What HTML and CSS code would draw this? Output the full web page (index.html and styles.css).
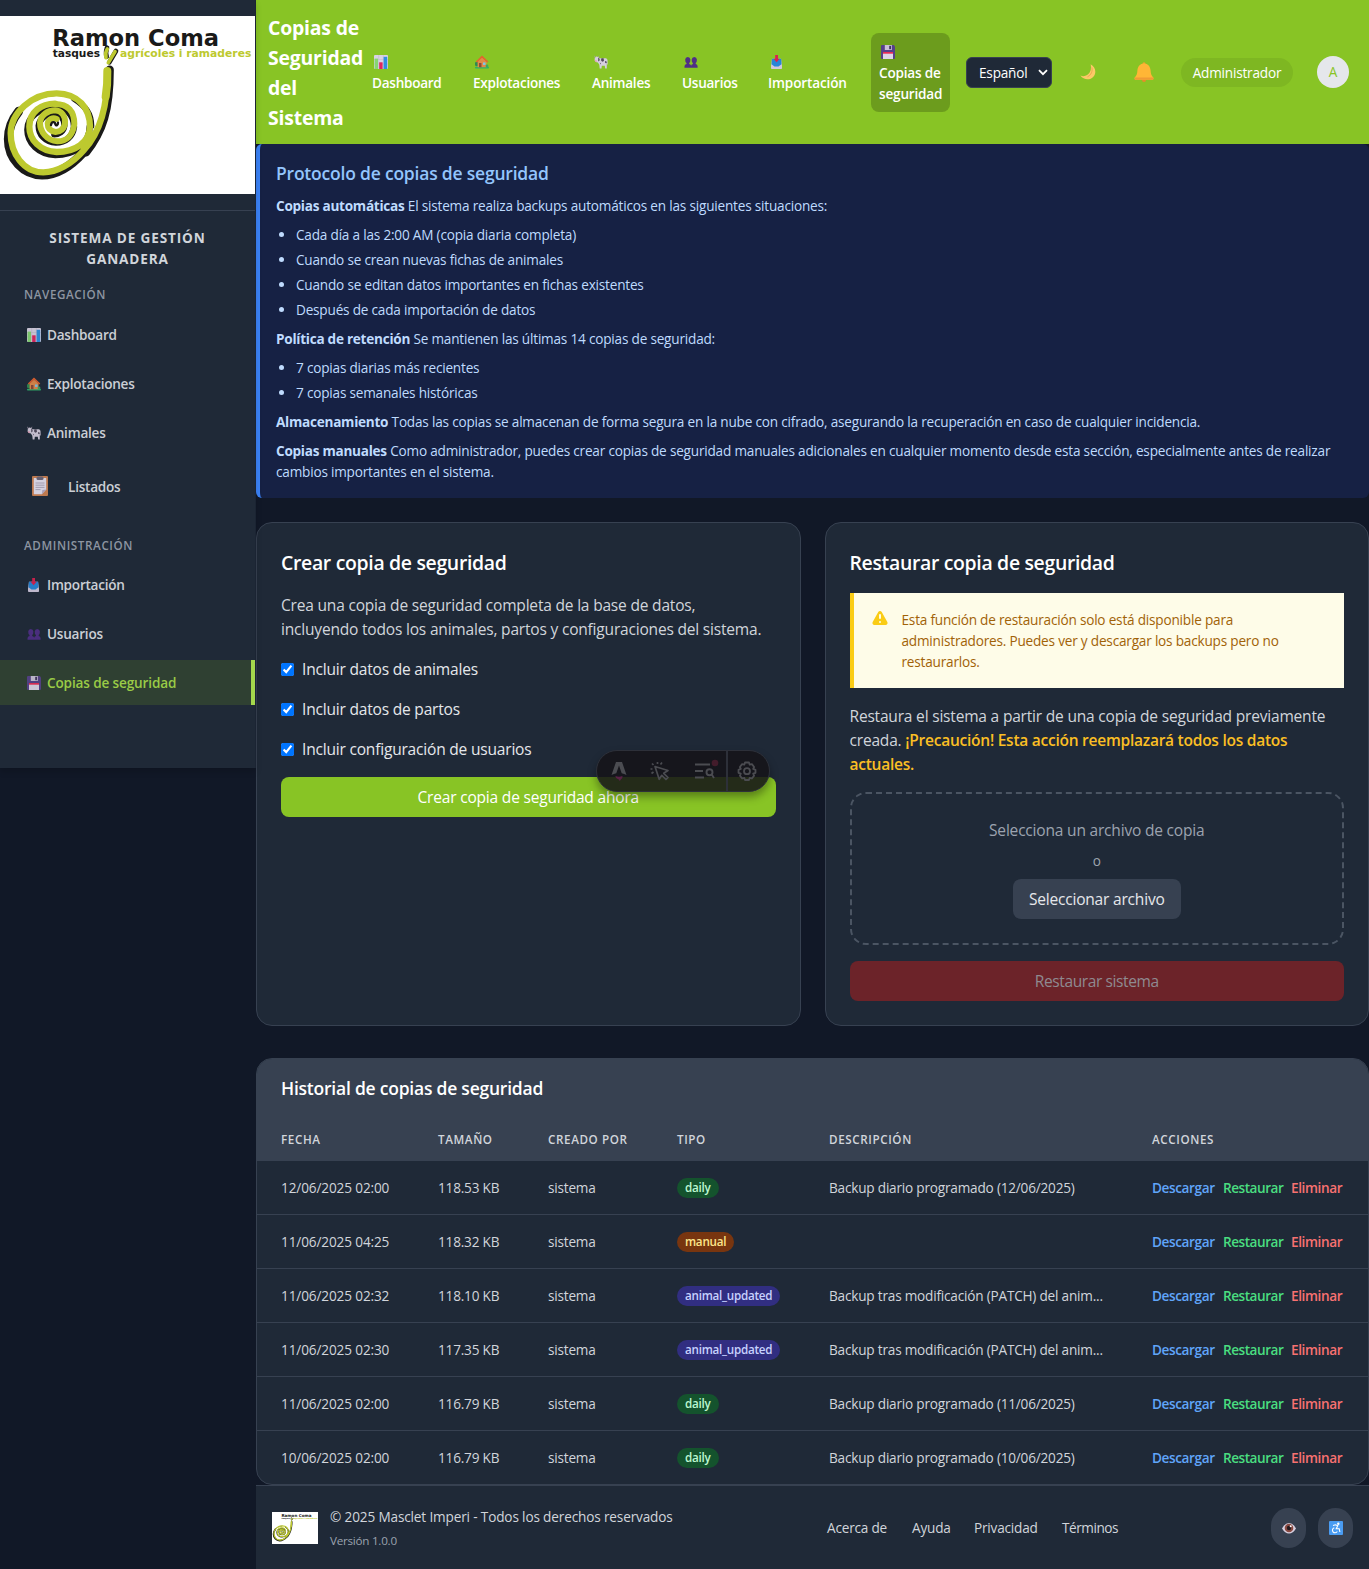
FILE: index.html
```html
<!DOCTYPE html>
<html lang="es">
<head>
<meta charset="utf-8">
<title>Copias de Seguridad del Sistema</title>
<link rel="stylesheet" href="styles.css">
</head>
<body>
<svg class="sprite" width="0" height="0" aria-hidden="true">
  <symbol id="chart" viewBox="0 0 14 14"><rect width="14" height="14" rx="1" fill="#d9d3e3"/><path d="M0 4.5h14M0 9h14M4.7 0v14M9.3 0v14" stroke="#bdb6c8" stroke-width=".5"/><rect x=".6" y="3.6" width="3.4" height="10.4" fill="#86d672"/><rect x="5.2" y="7.3" width="3.4" height="6.7" fill="#e0265e"/><rect x="9.6" y="1.8" width="3.6" height="12.2" fill="#2f8fe0"/></symbol>
  <symbol id="house" viewBox="0 0 14 14"><circle cx="2" cy="9" r="2.3" fill="#2e8b4f"/><rect y="11.8" width="14" height="1.6" rx=".7" fill="#2fae6a"/><path d="M2.6 6.5 7 2.4l4.6 4.1v5.7h-9z" fill="#e08a4a"/><path d="M1.4 7 7 1.6 12.8 7" fill="none" stroke="#e5622f" stroke-width="1.5"/><rect x="4" y="8" width="2.5" height="4.2" fill="#8c4b36"/><rect x="8" y="7.5" width="2.5" height="2.4" fill="#7cc8ee"/><circle cx="12" cy="11" r="1.4" fill="#38a562"/></symbol>
  <symbol id="cow" viewBox="0 0 14 14"><path d="M.8 2.600 2.400 1.600l1.900.500L5.600 3.200h6.600l1.300 1.600.2 5-.9-.8V13.400h-1.600l-.4-2.600H7.800L7.500 13.400H5.700L5.300 9.800 3.900 7.600 1.600 7 .6 5.600z" fill="#d5cede"/><path d="m4.200 2.600 1.400 1.200v1.800l-1.400.9zM7.400 3.300h2.200l.4 2.600-1.800.8-1.200-1.400zM11 6l1.600.4.2 1.800-1.600-.2zM5.800 7.400l1.200 1-.6 1.200z" fill="#514a5c"/><path d="M.7 5.400h2v1.400H1.500z" fill="#e58aa4"/><path d="m1.300 2.600-.8-1.800M4.400 2l.6-1.200" stroke="#a69aae" stroke-width=".8"/></symbol>
  <symbol id="users" viewBox="0 0 14 14"><path d="M.5 12.8v-1.5q0-2 2-2.2V8Q1 7 1.2 4.6 1.4 2 3.8 2t2.6 2.6Q6.500 7 5.200 8v1.100q2 .2 2 2.200v1.500zM7 12.8v-1.500q0-2 1.900-2.200V8Q7.500 7 7.700 4.600 8 2 10.300 2t2.600 2.600Q13 7 11.700 8v1.100q1.900.2 1.900 2.200v1.500z" fill="#4f2f86"/></symbol>
  <symbol id="inbox" viewBox="0 0 14 14"><path d="M2 3.800h9l1 6.700v2.700q0 .8-.8.8H2q-1 0-1-.8v-2.700z" fill="#cfc7dc"/><path d="M1.900 3.800h9.300l.3 5.500-1.700 1.200-1.300 1h-4l-1.300-1-1.700-1.200z" fill="#2785d8"/><path d="M5.200 0h2.800v3.800h1.700L6.600 7.200 3.500 3.800h1.700z" fill="#d9214e"/></symbol>
  <symbol id="floppy" viewBox="0 0 14 14"><path d="M1 0h11.800L14 1.400V13q0 1-1 1H1q-1 0-1-1V1q0-1 1-1z" fill="#55408a"/><rect x="3.800" width="7" height="5" fill="#c9c0d8"/><rect x="8.200" y=".8" width="1.800" height="3.400" fill="#40325f"/><rect x="2" y="7" width="10" height="7" fill="#ddd5e8"/><rect x="2" y="7" width="10" height="1.700" fill="#e92b56"/></symbol>
  <symbol id="clipboard" viewBox="0 0 16 20"><rect width="16" height="20" rx="1" fill="#cf8252"/><path d="M1.800 2h12.400v11.600L9.800 18.300h-8z" fill="#e9e4f2"/><path d="M14.200 13.600 9.800 18.300l.5-4.300z" fill="#b9aec9"/><rect x="4.500" y=".5" width="7" height="3.500" rx="1.500" fill="#6e6778"/><path d="M3.500 7h9M3.500 9.200h9M3.500 11.400h9M3.500 13.600h5" stroke="#a39bb0" stroke-width=".8"/></symbol>
  <symbol id="snail" viewBox="0 0 765 534">
    <g transform="translate(0 -48)" fill="none" stroke-linecap="round">
      <g stroke="#1a1a18" transform="translate(-4 9)"><path stroke-width="27" d="M60 325C40 350 29 380 29 408C29 468 75 516 130 516C175 516 215 492 255 447"/><path stroke-width="10" d="M60 325C90 290 125 276 170 274"/><path stroke-width="19" d="M273 372C273 425 225 456 170 456C120 454 86 420 86 380C86 338 125 316 165 314C205 312 226 338 226 372C222 402 200 419 172 419C140 418 120 395 120 368C122 346 145 331 165 329C185 331 198 347 197 368C195 386 180 394 167 394"/></g>
      <path stroke="#1a1a18" stroke-width="25" d="M329 209C329 330 308 395 258 457"/>
      <path stroke="#1a1a18" stroke-width="18" d="M222 296C256 318 274 340 274 378"/>
      <path stroke="#bdc92f" stroke-width="24" d="M322 213Q323 255 317 290"/>
      <path stroke="#bdc92f" stroke-width="19" d="M322 213C324 330 297 400 252 450C215 493 170 517 130 517C70 517 32 460 32 400C32 340 95 280 170 280C235 281 270 325 270 380C268 428 225 456 170 456C120 453 88 420 88 380C88 335 125 311 165 311"/>
      <path stroke="#bdc92f" stroke-width="18" d="M165 312C205 312 223 335 223 372C219 405 200 424 172 424C140 422 120 395 120 368C122 344 145 331 165 331C185 333 196 347 195 368C193 388 180 396 167 396C150 394 143 384 143 370C145 357 158 352 170 357"/>
      <path stroke="#1a1a18" stroke-width="7" d="M153 375C155 362 166 366 166 373C169 380 174 374 174 368"/>
      <path stroke="#1a1a18" stroke-width="14" d="M321 143q-5 15-1 27M348 153l-20 34"/>
      <path stroke="#bdc92f" stroke-width="11" d="M322 147q-8 12-4 26M345 155l-20 33"/>
    </g>
  </symbol>
</svg>

<div class="layout">
  <aside class="sidebar">
    <div class="brand">
      <svg class="brand-logo" viewBox="0 0 765 534" preserveAspectRatio="none">
        <rect width="765" height="534" fill="#fff"/>
        <text x="157" y="91" textLength="500" lengthAdjust="spacingAndGlyphs" class="logo-name">Ramon Coma</text>
        <text x="158" y="124" textLength="142" lengthAdjust="spacingAndGlyphs" class="logo-sub">tasques</text>
        <text x="360" y="124" textLength="394" lengthAdjust="spacingAndGlyphs" class="logo-sub logo-green">agrícoles i ramaderes</text>
        <use href="#snail" width="765" height="534"/>
      </svg>
    </div>
    <div class="system-name">SISTEMA DE GESTIÓN<br>GANADERA</div>
    <nav>
      <h3 class="side-heading">NAVEGACIÓN</h3>
      <a class="side-link"><svg class="emoji"><use href="#chart"/></svg><span>Dashboard</span></a>
      <a class="side-link"><svg class="emoji"><use href="#house"/></svg><span>Explotaciones</span></a>
      <a class="side-link"><svg class="emoji"><use href="#cow"/></svg><span>Animales</span></a>
      <a class="side-link side-link-large"><svg class="emoji-large"><use href="#clipboard"/></svg><span>Listados</span></a>
      <h3 class="side-heading side-heading-admin">ADMINISTRACIÓN</h3>
      <a class="side-link"><svg class="emoji"><use href="#inbox"/></svg><span>Importación</span></a>
      <a class="side-link"><svg class="emoji"><use href="#users"/></svg><span>Usuarios</span></a>
      <a class="side-link active"><svg class="emoji"><use href="#floppy"/></svg><span>Copias de seguridad</span></a>
    </nav>
  </aside>

  <div class="main">
    <header class="topbar">
      <h1 class="page-title">Copias de Seguridad del Sistema</h1>
      <nav class="topnav">
        <a class="top-link w-dash"><svg class="emoji"><use href="#chart"/></svg><span>Dashboard</span></a>
        <a class="top-link w-expl"><svg class="emoji"><use href="#house"/></svg><span>Explotaciones</span></a>
        <a class="top-link w-anim"><svg class="emoji"><use href="#cow"/></svg><span>Animales</span></a>
        <a class="top-link w-user"><svg class="emoji"><use href="#users"/></svg><span>Usuarios</span></a>
        <a class="top-link w-impo"><svg class="emoji"><use href="#inbox"/></svg><span>Importación</span></a>
        <a class="top-link w-copy current"><svg class="emoji"><use href="#floppy"/></svg><span>Copias de seguridad</span></a>
      </nav>
      <div class="language"><span>Español</span><svg width="10" height="7" viewBox="0 0 10 7"><path d="M1 1.200l4 4 4-4" fill="none" stroke="#fff" stroke-width="1.800"/></svg></div>
      <div class="moon"><svg width="16" height="16" viewBox="0 0 16 16"><path d="M10.600.300C15.500 3 16.700 8.500 13.600 12.500 10.200 16.500 3.800 16.400.400 11.600 4.500 13 8 11.500 9.800 8.300 11.200 5.600 11.200 2.800 10.600.300Z" fill="#fbc968"/><path d="M11.800 3.500c1 3.500-.5 7.500-4.300 9.300" fill="none" stroke="#eda951" stroke-width="1"/></svg></div>
      <div class="bell"><svg width="20" height="20" viewBox="0 0 20 20"><circle cx="10" cy="18" r="2" fill="#e88b2a"/><circle cx="10" cy="1.700" r="1.500" fill="#f5a42d"/><path d="M10 1.500c4 0 6.300 3 6.600 7 .2 3.500.7 5 2.700 6.900.5 1.700 0 2.400-1.300 2.400H2C.700 17.800.200 17 .700 15.400c2-1.900 2.500-3.400 2.700-6.900.3-4 2.600-7 6.600-7z" fill="#ffb636"/><path d="M.700 15.400h18.600c.5 1.700 0 2.400-1.300 2.400H2C.700 17.800.200 17 .700 15.400z" fill="#f09a35"/></svg></div>
      <div class="role">Administrador</div>
      <div class="avatar">A</div>
    </header>

    <section class="protocol">
      <h2>Protocolo de copias de seguridad</h2>
      <p><strong>Copias automáticas</strong> El sistema realiza backups automáticos en las siguientes situaciones:</p>
      <ul>
        <li>Cada día a las 2:00 AM (copia diaria completa)</li>
        <li>Cuando se crean nuevas fichas de animales</li>
        <li>Cuando se editan datos importantes en fichas existentes</li>
        <li>Después de cada importación de datos</li>
      </ul>
      <p><strong>Política de retención</strong> Se mantienen las últimas 14 copias de seguridad:</p>
      <ul>
        <li>7 copias diarias más recientes</li>
        <li>7 copias semanales históricas</li>
      </ul>
      <p><strong>Almacenamiento</strong> Todas las copias se almacenan de forma segura en la nube con cifrado, asegurando la recuperación en caso de cualquier incidencia.</p>
      <p><strong>Copias manuales</strong> Como administrador, puedes crear copias de seguridad manuales adicionales en cualquier momento desde esta sección, especialmente antes de realizar<br>cambios importantes en el sistema.</p>
    </section>

    <div class="cards">
      <section class="card">
        <h2>Crear copia de seguridad</h2>
        <p class="lead">Crea una copia de seguridad completa de la base de datos,<br>incluyendo todos los animales, partos y configuraciones del sistema.</p>
        <label class="check"><input type="checkbox" checked><span>Incluir datos de animales</span></label>
        <label class="check"><input type="checkbox" checked><span>Incluir datos de partos</span></label>
        <label class="check"><input type="checkbox" checked><span>Incluir configuración de usuarios</span></label>
        <div class="btn btn-create">Crear copia de seguridad ahora</div>
      </section>
      <section class="card">
        <h2>Restaurar copia de seguridad</h2>
        <div class="warning">
          <svg width="20" height="20" viewBox="0 0 20 20"><path fill="#facc15" fill-rule="evenodd" d="M8.257 3.099c.765-1.360 2.722-1.360 3.486 0l5.580 9.920c.750 1.334-.213 2.980-1.742 2.980H4.420c-1.530 0-2.493-1.646-1.743-2.980l5.580-9.920zM11 13a1 1 0 11-2 0 1 1 0 012 0zm-1-8a1 1 0 00-1 1v3a1 1 0 002 0V6a1 1 0 00-1-1z"/></svg>
          <p>Esta función de restauración solo está disponible para<br>administradores. Puedes ver y descargar los backups pero no<br>restaurarlos.</p>
        </div>
        <p class="lead">Restaura el sistema a partir de una copia de seguridad previamente<br>creada. <strong>¡Precaución! Esta acción reemplazará todos los datos<br>actuales.</strong></p>
        <div class="dropzone">
          <p>Selecciona un archivo de copia</p>
          <small>o</small>
          <div class="btn btn-file">Seleccionar archivo</div>
        </div>
        <div class="btn btn-restore">Restaurar sistema</div>
      </section>
    </div>

    <section class="history">
      <h2>Historial de copias de seguridad</h2>
      <table>
        <colgroup><col class="c1"><col class="c2"><col class="c3"><col class="c4"><col class="c5"><col></colgroup>
        <thead><tr><th>FECHA</th><th>TAMAÑO</th><th>CREADO POR</th><th>TIPO</th><th>DESCRIPCIÓN</th><th>ACCIONES</th></tr></thead>
        <tbody>
          <tr><td>12/06/2025 02:00</td><td>118.53 KB</td><td>sistema</td><td><span class="badge daily">daily</span></td><td>Backup diario programado (12/06/2025)</td><td><div class="actions"><a class="dl">Descargar</a><a class="rs">Restaurar</a><a class="rm">Eliminar</a></div></td></tr>
          <tr><td>11/06/2025 04:25</td><td>118.32 KB</td><td>sistema</td><td><span class="badge manual">manual</span></td><td></td><td><div class="actions"><a class="dl">Descargar</a><a class="rs">Restaurar</a><a class="rm">Eliminar</a></div></td></tr>
          <tr><td>11/06/2025 02:32</td><td>118.10 KB</td><td>sistema</td><td><span class="badge updated">animal_updated</span></td><td>Backup tras modificación (PATCH) del anim...</td><td><div class="actions"><a class="dl">Descargar</a><a class="rs">Restaurar</a><a class="rm">Eliminar</a></div></td></tr>
          <tr><td>11/06/2025 02:30</td><td>117.35 KB</td><td>sistema</td><td><span class="badge updated">animal_updated</span></td><td>Backup tras modificación (PATCH) del anim...</td><td><div class="actions"><a class="dl">Descargar</a><a class="rs">Restaurar</a><a class="rm">Eliminar</a></div></td></tr>
          <tr><td>11/06/2025 02:00</td><td>116.79 KB</td><td>sistema</td><td><span class="badge daily">daily</span></td><td>Backup diario programado (11/06/2025)</td><td><div class="actions"><a class="dl">Descargar</a><a class="rs">Restaurar</a><a class="rm">Eliminar</a></div></td></tr>
          <tr><td>10/06/2025 02:00</td><td>116.79 KB</td><td>sistema</td><td><span class="badge daily">daily</span></td><td>Backup diario programado (10/06/2025)</td><td><div class="actions"><a class="dl">Descargar</a><a class="rs">Restaurar</a><a class="rm">Eliminar</a></div></td></tr>
        </tbody>
      </table>
    </section>

    <footer class="footer">
      <svg class="footer-logo" viewBox="0 0 765 534" preserveAspectRatio="none">
        <rect width="765" height="534" fill="#fff"/>
        <text x="157" y="91" textLength="500" lengthAdjust="spacingAndGlyphs" class="logo-name">Ramon Coma</text>
        <text x="158" y="124" textLength="142" lengthAdjust="spacingAndGlyphs" class="logo-sub">tasques</text>
        <text x="360" y="124" textLength="394" lengthAdjust="spacingAndGlyphs" class="logo-sub logo-green">agrícoles i ramaderes</text>
        <use href="#snail" width="765" height="534"/>
      </svg>
      <div class="copyright"><p>© 2025 Masclet Imperi - Todos los derechos reservados</p><small>Versión 1.0.0</small></div>
      <nav class="footer-links"><a class="f1">Acerca de</a><a class="f2">Ayuda</a><a class="f3">Privacidad</a><a class="f4">Términos</a></nav>
      <div class="round"><svg width="14" height="12" viewBox="0 0 14 12"><path d="M0 6.500Q3 1 7 1t7 5.500Q11 11.500 7 11.500T0 6.500z" fill="#d8d0e0"/><circle cx="7" cy="6" r="4.300" fill="#8a4a42"/><circle cx="7" cy="6" r="2.200" fill="#24191d"/><circle cx="8.700" cy="4.200" r="1" fill="#fff"/></svg></div>
      <div class="round"><svg width="14" height="14" viewBox="0 0 14 14"><rect width="14" height="14" rx="1" fill="#4a9cf2"/><circle cx="9.300" cy="2.700" r="1.200" fill="#fff"/><path d="M4 4.500l2.500-.7 2.300.9-1.600 3h3l.7 3.300M5.300 6.700a2.600 2.600 0 1 0 3 3.800" fill="none" stroke="#fff" stroke-width="1.100"/></svg></div>
    </footer>
  </div>
</div>

<div class="devbar">
  <span class="tool tool-astro"><svg width="18" height="20" viewBox="0 0 18 20"><path d="M6 1h6l4.500 13q-2.200-1.300-4.800-1.700L9 4.500 6.300 12.300Q3.700 12.700 1.500 14z" fill="#4b4c51"/><path d="M5.500 15q3.500 1.500 7 0 .4 2.200-1.500 3.300L9.800 20l-1.300-1.800Q5.500 17.500 5.500 15z" fill="#5a2147"/></svg></span>
  <span class="tool tool-cursor"><svg width="20" height="20" viewBox="0 0 20 20" fill="none" stroke="#4b4c51" stroke-width="1.700" stroke-linejoin="round"><path d="M5 5.500 18 9.500l-4.300 2.800 4.300 4.200-2 2-4.200-4.200-2.600 4z"/><path d="M7.500 3V1M10.500 3.500 12 1.500M2.500 8h-2M3.500 11 1.500 12.500M3.500 4 2 2.500"/></svg></span>
  <span class="tool tool-audit"><svg width="24" height="20" viewBox="0 0 24 20" overflow="visible" fill="none" stroke="#4b4c51" stroke-width="1.900"><path d="M1 3.500h15M1 10h8M1 16.500h9"/><circle cx="15.500" cy="11.300" r="3"/><path d="m17.700 13.500 2.300 3.500"/><circle cx="21" cy="2" r="3.300" fill="#431c2b" stroke="none"/></svg></span>
  <span class="tool tool-settings"><svg width="20" height="20" viewBox="0 0 20 20" fill="none" stroke="#4b4c51" stroke-width="1.800" stroke-linejoin="round"><path d="M8 1.500h4l.7 2.200 2.200-.6 2.200 2.900-.9 1.900 2.300.9v3l-2.300.9.900 1.900-2.200 2.900-2.200-.7-.7 2.200H8l-.7-2.200-2.200.7-2.200-2.900.9-1.900-2.300-.9v-3l2.300-.9L2.900 6l2.200-2.900 2.200.6z"/><circle cx="10" cy="10.200" r="3"/></svg></span>
</div>
</body>
</html>
```
FILE: styles.css
```css
* { box-sizing: border-box; }
body {
  margin: 0;
  background: #111827;
  color: #d1d5db;
  font-family: "Open Sans", "Noto Sans", sans-serif;
  font-size: 14px;
  font-size-adjust: 0.52;
  letter-spacing: -.2px;
  line-height: 21px;
  position: relative;
}
h1, h2, h3, p, ul { margin: 0; padding: 0; }
.sprite { position: absolute; }
.logo-name, .logo-sub { font-family: "DejaVu Sans", sans-serif; font-weight: 700; font-size-adjust: none; letter-spacing: 0; fill: #1a1a18; }
.logo-name { font-size: 68px; }
.logo-sub { font-size: 31px; }
.logo-green { fill: #bdc92f; }

.layout { display: flex; align-items: flex-start; width: 1369px; height: 1569px; }
.emoji { width: 14px; height: 14px; flex: none; display: block; }

.sidebar {
  width: 256px; height: 768px; flex: none;
  background: #1f2937; border-right: 1px solid #1b2433;
  box-shadow: 0 4px 6px rgba(0,0,0,.15);
  z-index: 1;
}
.brand { padding: 16px 0; border-bottom: 1px solid #374151; }
.brand-logo { display: block; width: 255px; height: 178px; }
.system-name { padding-top: 16px; height: 74px; text-align: center; font-weight: 700; letter-spacing: .85px; }
.side-heading { padding: 1px 0 0 24px; height: 27px; font-size: 12px; line-height: 18px; font-weight: 600; letter-spacing: .6px; color: #8d95a1; }
.side-heading-admin { margin-top: 22px; padding-top: 2px; }
.side-link { display: flex; align-items: center; gap: 6px; height: 45px; margin-bottom: 4px; padding-left: 27px; font-weight: 600; letter-spacing: -.25px; color: #cbcfd5; }
.side-link .emoji { opacity: .9; }
.side-link-large { height: 54px; padding-left: 32px; gap: 20px; }
.emoji-large { width: 16px; height: 20px; opacity: .9; }
.side-link.active { background: #2f4032; border-right: 4px solid #a4d84c; color: #9acb46; letter-spacing: -.15px; }

.main { width: 1113px; flex: none; }
.topbar { display: flex; align-items: center; height: 144px; padding-left: 12px; background: #88c425; color: #fff; }
.page-title { width: 96px; padding-top: 2px; font-size: 20px; line-height: 30px; font-weight: 700; }
.topnav { display: flex; align-items: center; gap: 16px; margin-right: 16px; }
.top-link { padding: 8px; font-weight: 600; letter-spacing: -.28px; white-space: nowrap; }
.top-link .emoji { margin: 4px 0 3px 2px; }
.w-dash { width: 85px; } .w-expl { width: 103px; } .w-anim { width: 74px; }
.w-user { width: 70px; } .w-impo { width: 95px; letter-spacing: -.15px; }
.w-copy { width: 79px; white-space: normal; letter-spacing: -.2px; }
.current { background: #6c9c1d; border-radius: 8px; }
.language { display: flex; align-items: center; justify-content: space-between; width: 86px; height: 31px; padding: 0 3px 0 12px; background: #1f2937; border: 1px solid #374151; border-radius: 6px; }
.moon { width: 16px; height: 16px; margin: 0 0 0 28px; }
.bell { width: 20px; height: 20px; margin: 0 27px 0 38px; }
.role { width: 112px; height: 29px; line-height: 29px; text-align: center; background: #7eb722; border-radius: 15px; }
.avatar { width: 32px; height: 32px; margin-left: 24px; line-height: 32px; border-radius: 50%; background: #e5e7eb; color: #88c425; text-align: center; }

.protocol { height: 354px; padding: 16px; border-left: 4px solid #3b82f6; border-radius: 6px; background: #162144; color: #bfdbfe; }
.protocol h2 { font-size: 18px; line-height: 27px; margin-bottom: 8px; font-weight: 600; color: #93c5fd; }
.protocol p, .protocol ul { margin-bottom: 8px; white-space: nowrap; }
.protocol strong { letter-spacing: -.27px; }
.protocol ul { padding-left: 20px; }
.protocol li { margin-bottom: 4px; }

.cards { display: grid; grid-template-columns: 1fr 1fr; gap: 24px; margin: 24px 0 32px; }
.card { height: 504px; padding: 24px; background: #1f2937; border: 1px solid #374151; border-radius: 16px; font-size: 16px; line-height: 24px; }
.card h2 { padding-top: 1px; font-size: 20px; line-height: 30px; font-weight: 600; color: #fff; margin-bottom: 15px; letter-spacing: -.32px; }
.lead { margin-bottom: 16px; white-space: nowrap; }
.lead strong { color: #fbbf24; font-weight: 600; letter-spacing: -.26px; }
.check { display: flex; align-items: center; height: 24px; margin-bottom: 16px; color: #e5e7eb; }
.check input { width: 13px; height: 13px; margin: 0 8px 0 0; accent-color: #0075ff; }
.btn { height: 40px; line-height: 41px; border-radius: 8px; text-align: center; }
.btn-create { background: #88c425; color: #fff; }
.warning { display: flex; gap: 12px; padding: 16px; margin-bottom: 16px; background: #fefce8; border-left: 4px solid #facc15; color: #a16207; font-size: 14px; line-height: 21px; white-space: nowrap; }
.dropzone { display: flex; flex-direction: column; align-items: center; gap: 8px; height: 153px; padding: 24px; margin-bottom: 16px; border: 2px dashed #4b5563; border-radius: 16px; color: #9ca3af; }
.dropzone small { font-size: 14px; line-height: 21px; }
.btn-file { width: 168px; background: #374151; color: #e5e7eb; }
.btn-restore { background: #6c2329; color: #8f8a90; letter-spacing: -.4px; }

.history { height: 427px; border: 1px solid #374151; border-radius: 16px; background: #1f2937; overflow: hidden; }
.history h2 { height: 59px; padding: 16px 24px; font-size: 18px; line-height: 27px; font-weight: 600; color: #fff; background: #374151; letter-spacing: -.22px; }
table { width: 100%; table-layout: fixed; border-collapse: separate; border-spacing: 0; }
.c1 { width: 157px; } .c2 { width: 110px; } .c3 { width: 129px; } .c4 { width: 152px; } .c5 { width: 323px; }
th { height: 43px; padding: 0 0 0 24px; background: #374151; text-align: left; font-size: 12px; line-height: 18px; font-weight: 600; letter-spacing: .6px; }
td { height: 54px; padding: 0 0 0 24px; white-space: nowrap; border-bottom: 1px solid #374151; }
td:first-child { letter-spacing: -.13px; }
tr:last-child td { border-bottom: 0; height: 53px; }
.badge { display: block; width: fit-content; height: 20px; padding: 0 8px; border-radius: 10px; font-size: 12px; line-height: 20px; font-weight: 600; letter-spacing: -.25px; }
.daily { background: #14532d; color: #bbf7d0; }
.manual { background: #78350f; color: #fde68a; }
.updated { background: #312e81; color: #c7d2fe; }
.actions { display: flex; gap: 8px; font-weight: 600; letter-spacing: -.4px; }
.dl { width: 63px; color: #60a5fa; } .rs { width: 60px; color: #4ade80; letter-spacing: -.48px; } .rm { color: #f87171; }

.footer { display: flex; align-items: center; height: 84px; padding-left: 16px; background: #1f2937; border-top: 1px solid #374151; }
.footer-logo { width: 46px; height: 32px; margin-right: 12px; }
.copyright { width: 497px; white-space: nowrap; letter-spacing: -.15px; }
.copyright p { line-height: 21px; margin-bottom: 4px; }
.copyright small { display: block; padding-top: 1px; font-size: 12px; line-height: 17px; letter-spacing: -.25px; color: #9ca3af; }
.footer-links { display: flex; width: 444px; }
.f1 { width: 85px; } .f2 { width: 62px; } .f3 { width: 88px; } .f4 { letter-spacing: -.45px; }
.round { display: flex; align-items: center; justify-content: center; width: 35px; height: 40px; margin-right: 12px; border-radius: 18px; background: #374151; }

.devbar {
  position: absolute; left: 596px; top: 750px; z-index: 5;
  display: flex; align-items: center; width: 174px; height: 42px;
  background: rgba(21,20,24,.87); border: 1px solid #2d3039; border-radius: 21px;
  box-shadow: 0 5px 9px rgba(0,0,0,.35);
}
.tool svg { display: block; }
.tool-astro { margin-left: 13px; }
.tool-cursor { margin-left: 22px; }
.tool-audit { margin-left: 24px; }
.tool-settings { display: flex; align-items: center; height: 40px; margin-left: 8px; padding-left: 9px; border-left: 2px solid #2d3039; }
```
